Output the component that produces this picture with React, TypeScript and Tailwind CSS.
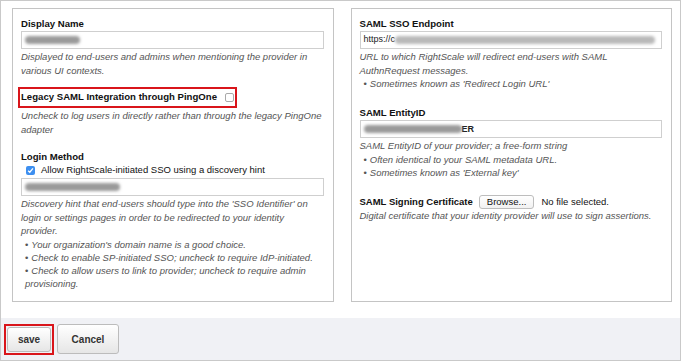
import type { ReactNode } from 'react'

const font = { fontFamily: '"Liberation Sans", Arial, sans-serif' }

function Label({ children }: { children: ReactNode }) {
  return <div className="text-[9.6px] leading-[14px] font-bold text-[#111]">{children}</div>
}

function Help({ children, className = '' }: { children: ReactNode; className?: string }) {
  return <div className={`text-[9.5px] leading-[13.5px] italic text-[#555] ${className}`}>{children}</div>
}

function Bullets({ items }: { items: string[] }) {
  return (
    <ul className="text-[9.5px] leading-[13.3px] italic text-[#555]">
      {items.map((item) => (
        <li key={item} className="pl-[4px] before:content-['•'] before:mr-[3px] before:not-italic">
          {item}
        </li>
      ))}
    </ul>
  )
}

function Field({ children }: { children?: ReactNode }) {
  return (
    <div className="h-[18px] w-full border border-[#cfcfcf] bg-white px-[3px] flex items-center overflow-hidden whitespace-nowrap text-[9px] text-[#222]">
      {children}
    </div>
  )
}

function Blur({ w, dark }: { w: string; dark?: boolean }) {
  return <span className={`${w} h-[8px] inline-block rounded-sm blur-[1.5px] ${dark ? 'bg-[#9a9a9a]' : 'bg-[#b9b9b9]'}`} />
}

export default function App() {
  return (
    <div style={font} className="w-[681px] h-[361px] border border-[#c9c9c9] bg-white flex flex-col">
      <div className="flex gap-[17px] pt-[7px] pl-[11px] pr-[8px]">
        {/* left column */}
        <div className="w-[322px] h-[294px] border border-[#c4c4c4] pt-[8px] pl-[8px] pr-[9px]">
          <Label>Display Name</Label>
          <Field>
            <Blur w="w-[55px]" dark />
          </Field>
          <div className="mt-[1px]">
            <Help>Displayed to end-users and admins when mentioning the provider in various UI contexts.</Help>
          </div>

          <div className="mt-[10px] -ml-[3px] w-[219px] h-[21px] border-2 border-[#d9151b] flex items-center pl-[1px] gap-[8px]">
            <span className="text-[9.6px] font-bold text-[#111] whitespace-nowrap">Legacy SAML Integration through PingOne</span>
            <span className="w-[9px] h-[9px] rounded-[2px] border border-[#a9a9a9] bg-white" />
          </div>
          <div className="mt-[1px]">
            <Help>Uncheck to log users in directly rather than through the legacy PingOne adapter</Help>
          </div>

          <div className="mt-[14px]">
            <Label>Login Method</Label>
          </div>
          <div className="flex items-center gap-[6px] pl-[5px] h-[13px] text-[9.5px] text-[#111]">
            <span className="w-[9px] h-[9px] rounded-[2px] bg-[#3d8ff0] flex items-center justify-center">
              <svg width="7" height="7" viewBox="0 0 8 8">
                <path d="M1.3 4.2 L3.2 6 L6.8 1.6" stroke="white" strokeWidth="1.5" fill="none" />
              </svg>
            </span>
            <span>Allow RightScale-initiated SSO using a discovery hint</span>
          </div>
          <div className="mt-[1px]">
            <Field>
              <Blur w="w-[95px]" dark />
            </Field>
          </div>
          <div className="mt-[1px]">
            <Help className="w-[292px]">
              Discovery hint that end-users should type into the 'SSO Identifier' on login or settings pages in order
              to be redirected to your identity provider.
            </Help>
          </div>
          <Bullets
            items={[
              "Your organization's domain name is a good choice.",
              'Check to enable SP-initiated SSO; uncheck to require IdP-initiated.',
              'Check to allow users to link to provider; uncheck to require admin provisioning.',
            ]}
          />
        </div>

        {/* right column */}
        <div className="w-[322px] h-[294px] border border-[#c4c4c4] pt-[8px] pl-[8px] pr-[9px]">
          <Label>SAML SSO Endpoint</Label>
          <Field>
            <span>https://c</span>
            <Blur w="w-[260px]" />
          </Field>
          <div className="mt-[1px]">
            <Help>URL to which RightScale will redirect end-users with SAML AuthnRequest messages.</Help>
          </div>
          <Bullets items={["Sometimes known as 'Redirect Login URL'"]} />

          <div className="mt-[16px]">
            <Label>SAML EntityID</Label>
          </div>
          <Field>
            <Blur w="w-[98px]" dark />
            <span className="font-bold">ER</span>
          </Field>
          <div className="mt-[1px]">
            <Help>SAML EntityID of your provider; a free-form string</Help>
          </div>
          <Bullets items={['Often identical to your SAML metadata URL.', "Sometimes known as 'External key'"]} />

          <div className="mt-[16px] flex items-center h-[14px] text-[9.5px] text-[#111]">
            <span className="font-bold">SAML Signing Certificate</span>
            <span className="ml-[6px] h-[14px] px-[7px] border border-[#bdbdbd] rounded-[3px] bg-gradient-to-b from-white to-[#f1f1f1] flex items-center">
              Browse...
            </span>
            <span className="ml-[7px]">No file selected.</span>
          </div>
          <Help>Digital certificate that your identity provider will use to sign assertions.</Help>
        </div>
      </div>

      {/* footer */}
      <div className="mt-auto h-[42px] bg-[#f0f1f5] flex items-center gap-[3px] pl-[3px]">
        <div className="border-2 border-[#d9151b] p-[1px] h-[31px] flex">
          <button className="w-[44px] border border-[#bcbcbc] rounded-[3px] bg-gradient-to-b from-white to-[#e6e6e6] text-[10px] font-bold text-[#333]">
            save
          </button>
        </div>
        <button className="w-[62px] h-[30px] border border-[#bcbcbc] rounded-[3px] bg-gradient-to-b from-white to-[#e6e6e6] text-[10px] font-bold text-[#333]">
          Cancel
        </button>
      </div>
    </div>
  )
}
